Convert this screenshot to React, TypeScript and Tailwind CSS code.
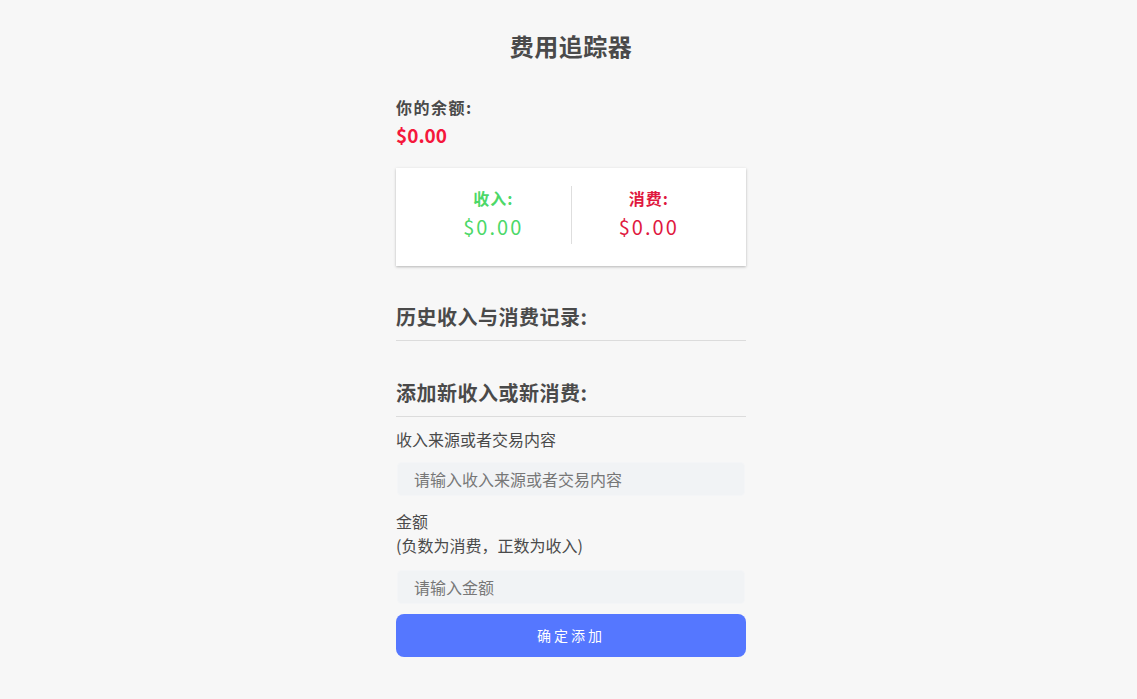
import { useState } from "react";

const FONT = { fontFamily: '"Noto Sans CJK SC", "Noto Sans", sans-serif' };

export default function App() {
  const [text, setText] = useState("");
  const [amount, setAmount] = useState("");

  return (
    <main
      className="min-h-[699px] bg-[#f7f7f7] text-[#4a4a4a] flex justify-center pl-[5px]"
      style={FONT}
    >
      <div className="w-[350px] pt-[28px]">
        <h1 className="text-center text-[24px] font-bold leading-[36px] tracking-[0.5px]">
          费用追踪器
        </h1>

        <div className="mt-[31px]">
          <h4 className="text-[16px] font-bold leading-[24px] tracking-[1.5px]">你的余额:</h4>
          <div className="text-[19px] font-bold leading-[30px] text-[#f5173c] mt-[1px]">
            $0.00
          </div>
        </div>

        <div className="mt-[18px] bg-white shadow-[0_1px_3px_rgba(0,0,0,0.18),0_1px_2px_rgba(0,0,0,0.1)] px-5 pt-[18px] pb-[22px] flex">
          <div className="flex-1 text-center border-r border-[#dedede]">
            <h4 className="text-[16px] font-bold leading-[24px] tracking-[1px] text-[#4cd868]">收入:</h4>
            <p className="text-[20px] tracking-[2px] leading-[30px] my-[2px] text-[#4cd868]">
              $0.00
            </p>
          </div>
          <div className="flex-1 text-center">
            <h4 className="text-[16px] font-bold leading-[24px] tracking-[1px] text-[#e0193f]">消费:</h4>
            <p className="text-[20px] tracking-[2px] leading-[30px] my-[2px] text-[#e0193f]">
              $0.00
            </p>
          </div>
        </div>

        <h3 className="mt-[37px] text-[20px] font-bold leading-[28px] tracking-[0.5px] pb-[9px] border-b border-[#dcdcdc]">
          历史收入与消费记录:
        </h3>
        <ul className="min-h-[18px]" />

        <h3 className="mt-[20px] text-[20px] font-bold leading-[28px] tracking-[0.5px] pb-[9px] border-b border-[#dcdcdc]">
          添加新收入或新消费:
        </h3>

        <form onSubmit={(e) => e.preventDefault()}>
          <label className="block mt-[10px] text-[16px] leading-[24px]">
            收入来源或者交易内容
          </label>
          <input
            type="text"
            value={text}
            onChange={(e) => setText(e.target.value)}
            placeholder="请输入收入来源或者交易内容"
            className="block mt-[11px] ml-[1px] w-[348px] h-[34px] rounded-[5px] bg-[#f1f3f5] border border-[#f4f5f7] px-[16px] text-[16px] outline-none placeholder:text-[#777]"
          />
          <label className="block mt-[13px] text-[16px] leading-[24px]">
            金额
            <br />
            (负数为消费，正数为收入)
          </label>
          <input
            type="number"
            value={amount}
            onChange={(e) => setAmount(e.target.value)}
            placeholder="请输入金额"
            className="block mt-[13px] ml-[1px] w-[348px] h-[34px] rounded-[5px] bg-[#f1f3f5] border border-[#f4f5f7] px-[16px] text-[16px] outline-none placeholder:text-[#777]"
          />
          <button
            type="submit"
            className="block mt-[10px] w-full h-[43px] rounded-[8px] bg-[#5577ff] text-white text-[14px] tracking-[3px]"
          >
            确定添加
          </button>
        </form>
      </div>
    </main>
  );
}
